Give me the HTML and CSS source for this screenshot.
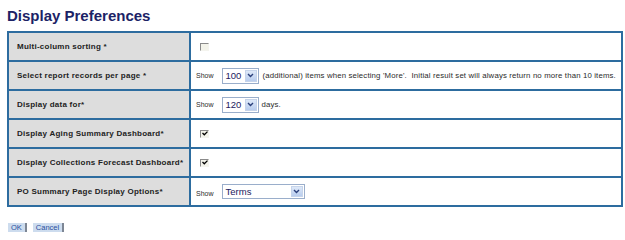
FILE: index.html
```html
<!DOCTYPE html>
<html>
<head>
<meta charset="utf-8">
<link rel="stylesheet" href="styles.css">
</head>
<body>
<h1 class="title">Display Preferences</h1>
<table class="prefs">
  <tr>
    <td class="label">Multi-column sorting *</td>
    <td class="value"><span class="cb"></span></td>
  </tr>
  <tr>
    <td class="label">Select report records per page *</td>
    <td class="value"><span class="show">Show</span><span class="sel sel-num"><span class="sel-text">100</span><span class="arrow"><svg width="7" height="5" viewBox="0 0 7 5"><path d="M1 1 L3.5 3.5 L6 1" fill="none" stroke="#2a3f7a" stroke-width="1.4"/></svg></span></span><span class="note">(additional) items when selecting 'More'.&nbsp; Initial result set will always return no more than 10 items.</span></td>
  </tr>
  <tr>
    <td class="label">Display data for*</td>
    <td class="value"><span class="show">Show</span><span class="sel sel-num"><span class="sel-text">120</span><span class="arrow"><svg width="7" height="5" viewBox="0 0 7 5"><path d="M1 1 L3.5 3.5 L6 1" fill="none" stroke="#2a3f7a" stroke-width="1.4"/></svg></span></span><span class="note note-short">days.</span></td>
  </tr>
  <tr>
    <td class="label">Display Aging Summary Dashboard*</td>
    <td class="value"><span class="cb checked"><svg width="6" height="5" viewBox="0 0 6 5"><path d="M0.5 2 L2.3 3.8 L5.5 0.6" fill="none" stroke="#000" stroke-width="1.3"/></svg></span></td>
  </tr>
  <tr>
    <td class="label">Display Collections Forecast Dashboard*</td>
    <td class="value"><span class="cb checked"><svg width="6" height="5" viewBox="0 0 6 5"><path d="M0.5 2 L2.3 3.8 L5.5 0.6" fill="none" stroke="#000" stroke-width="1.3"/></svg></span></td>
  </tr>
  <tr>
    <td class="label">PO Summary Page Display Options*</td>
    <td class="value"><span class="show show-low">Show</span><span class="sel sel-terms"><span class="sel-text">Terms</span><span class="arrow"><svg width="7" height="5" viewBox="0 0 7 5"><path d="M1 1 L3.5 3.5 L6 1" fill="none" stroke="#2a3f7a" stroke-width="1.4"/></svg></span></span></td>
  </tr>
</table>
<div class="buttons">
  <span class="btn">OK</span>
  <span class="btn">Cancel</span>
</div>
</body>
</html>
```

FILE: styles.css
```css
html, body {
  margin: 0;
  padding: 0;
  background: #ffffff;
}
body {
  padding: 7px 0 0 7px;
  font-family: "Liberation Sans", Arial, sans-serif;
}
.title {
  margin: 0 0 6px 0;
  font-family: "Liberation Sans", Arial, sans-serif;
  font-size: 15px;
  font-weight: bold;
  color: #1c2366;
  line-height: 18px;
}
.prefs {
  border-collapse: collapse;
  width: 616px;
}
.prefs td {
  border: 2px solid #2d6c9f;
  height: 27px;
  padding: 0;
  vertical-align: middle;
}
.label {
  width: 172px;
  background: #dddddd;
  padding-left: 8px !important;
  font-family: "Liberation Sans", Arial, sans-serif;
  font-weight: bold;
  font-size: 8px;
  letter-spacing: 0.25px;
  color: #222222;
}
.value {
  padding-left: 5px !important;
  font-size: 7px;
  color: #2b2b2b;
}
.show {
  display: inline-block;
  vertical-align: middle;
  margin-right: 8px;
}
.show-low {
  position: relative;
  top: 2px;
}
.note {
  display: inline-block;
  vertical-align: middle;
  margin-left: 4px;
  font-size: 7.8px;
  letter-spacing: 0.15px;
}
.note-short {
  margin-left: 3px;
}
.sel {
  display: inline-flex;
  vertical-align: middle;
  align-items: stretch;
  box-sizing: border-box;
  border: 1px solid #9aaecb;
  background: #ffffff;
  height: 16px;
}
.sel-num { width: 37px; }
.sel-terms { width: 83px; height: 15px; }
.sel-text {
  flex: 1;
  padding-left: 3px;
  font-size: 9.5px;
  line-height: 14px;
  color: #1b2160;
}
.sel-terms .sel-text { line-height: 13px; }
.arrow {
  width: 10px;
  margin: 1px;
  background: linear-gradient(#dde8f8, #b9cdee);
  border: 1px solid #c6d4ea;
  display: flex;
  align-items: center;
  justify-content: center;
}
.cb {
  display: inline-block;
  vertical-align: middle;
  box-sizing: border-box;
  width: 9px;
  height: 8px;
  margin-left: 4px;
  border-top: 1px solid #8a8a8a;
  border-left: 1px solid #8a8a8a;
  border-right: 1px solid #f4f4ee;
  border-bottom: 1px solid #f4f4ee;
  background: #f3f3ea;
  position: relative;
}
.cb svg {
  position: absolute;
  left: 1px;
  top: 0px;
}
.buttons {
  display: flex;
  gap: 6px;
  margin-top: 16px;
  margin-left: 1px;
}
.btn {
  display: inline-block;
  background: #cddcee;
  color: #2a4fa0;
  font-size: 7.5px;
  line-height: 9px;
  padding: 0 3px;
  border-right: 2px solid #7d8694;
}
```
